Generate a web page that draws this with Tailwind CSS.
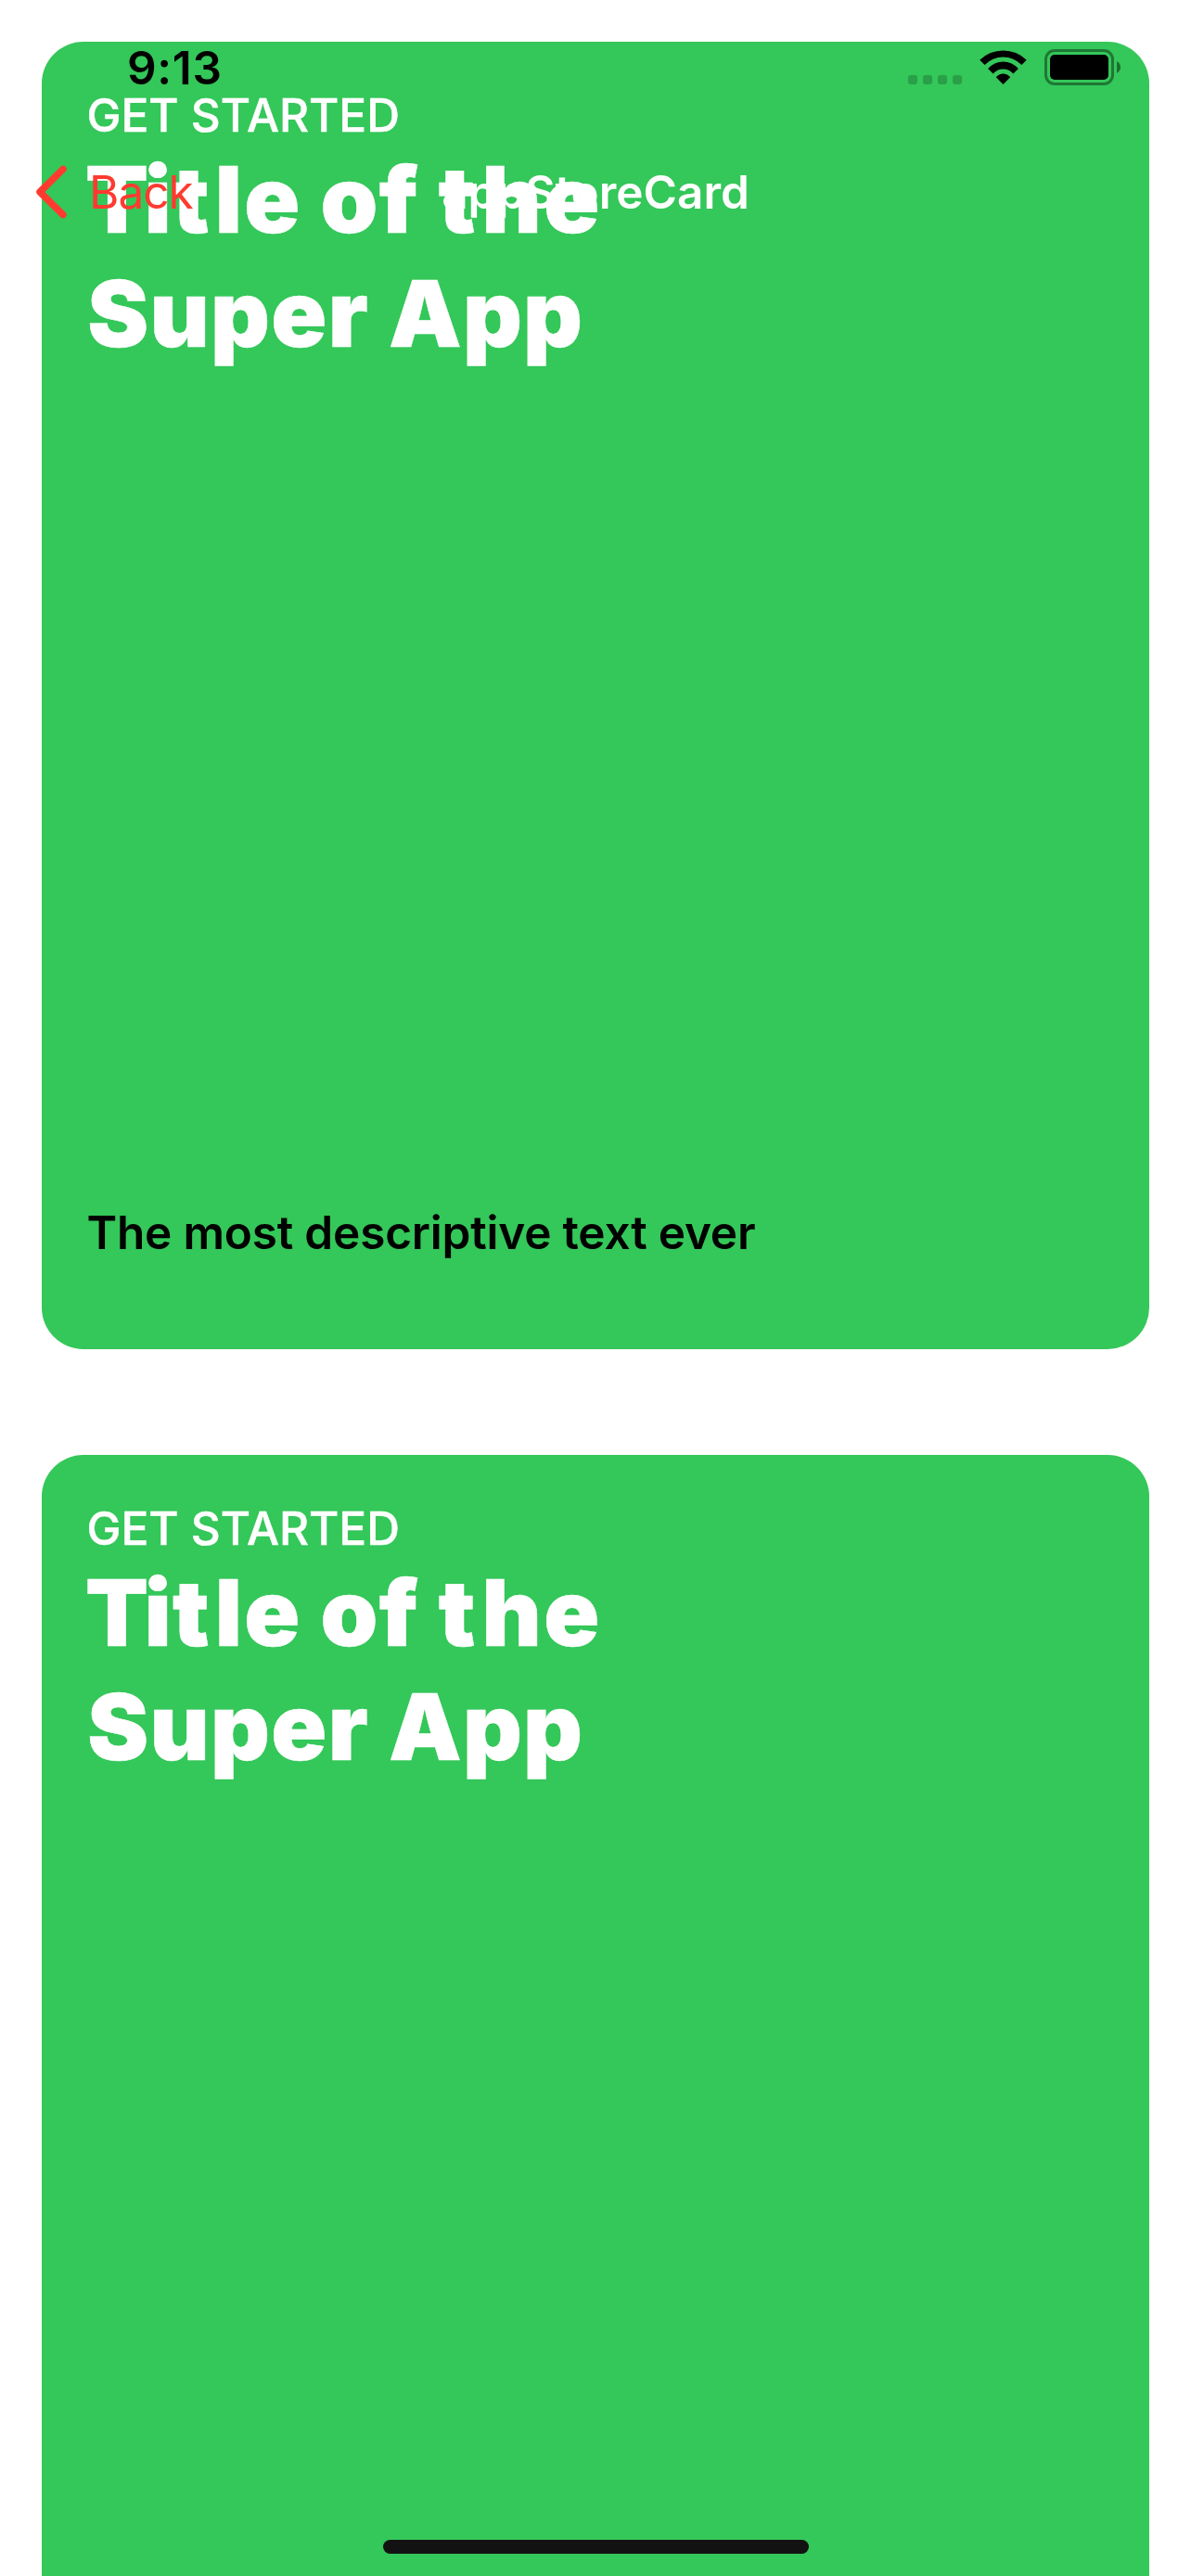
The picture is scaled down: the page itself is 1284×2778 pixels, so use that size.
<!DOCTYPE html>
<html lang="en">
<head>
<meta charset="utf-8">
<title>appStoreCard</title>
<script src="https://cdn.jsdelivr.net/npm/@tailwindcss/browser@4"></script>
</head>
<body class="relative h-[2778px] w-[1284px] overflow-hidden bg-white font-['Inter',sans-serif] text-[49.5px] leading-[60px]">
  <main class="flex h-full flex-col gap-[114px] px-[45px] pt-[45px]">
    <article class="flex h-[1410px] shrink-0 flex-col rounded-[45px] bg-[#34c759] pt-[49px] pr-12 pb-24 pl-[48.5px]">
      <p class="font-medium text-white [-webkit-text-stroke:0.5px_white]">GET STARTED</p>
      <h2 class="text-[99px] leading-[123px] font-black text-white [-webkit-text-stroke:0.5px_white]">
        <span class="-ml-[1.5px] block tracking-[1.3px]"><span class="tracking-[-4.5px]">T</span>i<span class="tracking-[6px]">t</span><span class="tracking-[2.3px]">l</span>e of <span class="tracking-[7px]">t</span><span class="tracking-[2.6px]">h</span>e</span>
        <span class="ml-[0.8px] block tracking-[1.3px]">Super App</span>
      </h2>
      <p class="mt-auto font-semibold tracking-[-0.19px] text-black">The most descriptive text ever</p>
    </article>
    <article class="flex min-h-0 flex-1 flex-col rounded-t-[45px] bg-[#34c759] pt-[49px] pr-12 pl-[48.5px]">
      <p class="font-medium text-white [-webkit-text-stroke:0.5px_white]">GET STARTED</p>
      <h2 class="text-[99px] leading-[123px] font-black text-white [-webkit-text-stroke:0.5px_white]">
        <span class="-ml-[1.5px] block tracking-[1.3px]"><span class="tracking-[-4.5px]">T</span>i<span class="tracking-[6px]">t</span><span class="tracking-[2.3px]">l</span>e of <span class="tracking-[7px]">t</span><span class="tracking-[2.6px]">h</span>e</span>
        <span class="ml-[0.8px] block tracking-[1.3px]">Super App</span>
      </h2>
    </article>
  </main>

  <!-- Status bar and navigation bar float over the scrolled cards -->
  <header class="absolute inset-x-0 top-0">
    <div class="flex h-[132px] items-start justify-between pt-[43px] pr-[76px] pl-[137px]">
      <time class="font-semibold tracking-[0.7px] text-black">9:13</time>
      <div class="flex pt-[10px]">
        <svg class="h-[40px] w-[229px]" viewBox="979 53 229 40" fill="black">
          <g fill-opacity="0.2">
            <rect x="979" y="81" width="10" height="10" rx="3"/>
            <rect x="995" y="81" width="10" height="10" rx="3"/>
            <rect x="1011" y="81" width="10" height="10" rx="3"/>
            <rect x="1027" y="81" width="10" height="10" rx="3"/>
          </g>
          <path d="M1056.3 64.8A35.7 35.7 0 0 1 1106.7 64.8L1101.4 70A27.6 27.6 0 0 0 1061.6 70Z"/>
          <path d="M1065.1 74.1A21.3 21.3 0 0 1 1097.9 74.1L1092.4 79.6A14 14 0 0 0 1070.6 79.6Z"/>
          <path d="M1073.8 83.2A9.9 9.9 0 0 1 1089.2 83.2L1081.5 91Z"/>
          <rect x="1127.5" y="54.5" width="72" height="36" rx="9.5" fill="none" stroke="black" stroke-opacity="0.4" stroke-width="3"/>
          <rect x="1132" y="59" width="63" height="27" rx="5"/>
          <path d="M1204 66.3C1206.5 67.3 1208 69.8 1208 72.5S1206.5 77.7 1204 78.7Z" fill-opacity="0.45"/>
        </svg>
      </div>
    </div>
    <nav class="grid h-[150px] grid-cols-3 items-center">
      <a class="flex items-center gap-[23px] pl-[39px] tracking-[-1px] text-[#ff3b30]">
        <svg class="h-[58px] w-[34px]" viewBox="39 178 34 58" fill="none" stroke="#ff3b30" stroke-width="7.5" stroke-linecap="round" stroke-linejoin="round"><path d="M68 182.4L43 207L68 231.6"/></svg>
        <span>Back</span>
      </a>
      <h1 class="text-center font-semibold whitespace-nowrap text-white">appStoreCard</h1>
    </nav>
  </header>

  <!-- Home indicator -->
  <div class="absolute top-[2739px] left-[413px] h-[15px] w-[459px] rounded-full bg-[#121212]"></div>
</body>
</html>
